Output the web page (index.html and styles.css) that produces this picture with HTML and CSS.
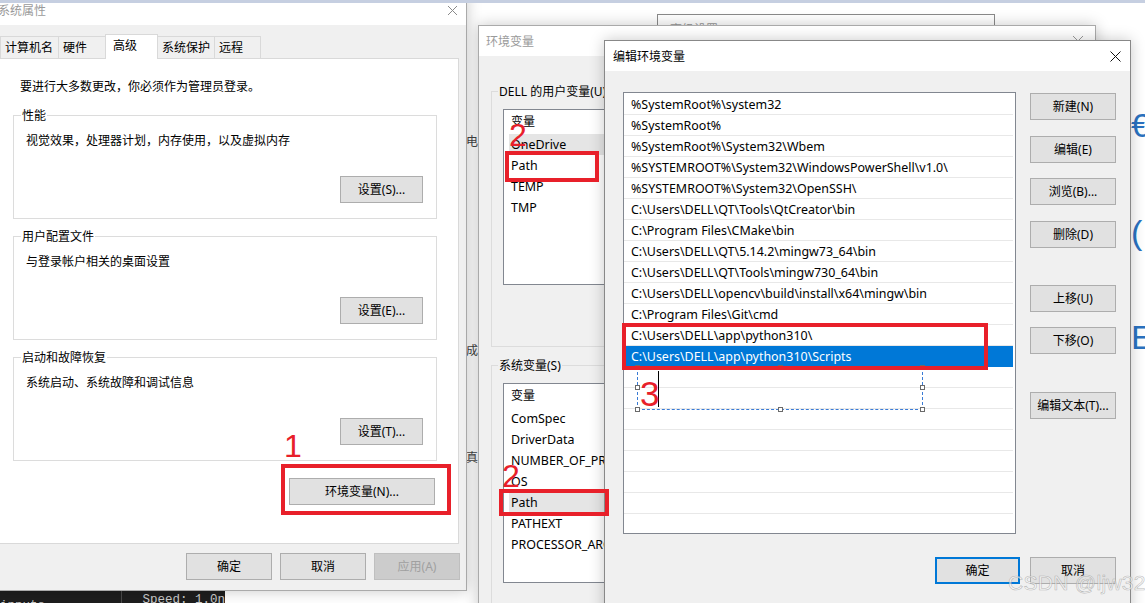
FILE: index.html
```html
<!DOCTYPE html>
<html lang="zh-CN">
<head>
<meta charset="utf-8">
<title>编辑环境变量</title>
<link rel="stylesheet" href="styles.css">
</head>
<body>
<div class="desk">
  <div class="topband"></div>

  <div class="term">
    <div class="t-left">inputs</div>
    <div class="t-div"></div>
    <div class="t-right">Speed: 1.0n</div>
  </div>

  <div class="back-chars"><span class="bc1">电</span><span class="bc2">成</span><span class="bc3">真</span></div>
  <div class="right-frags"><span class="rf1">€</span><span class="rf2">(</span><span class="rf3">E</span></div>

  <div class="win w-adv"><div class="adv-title">高级设置</div></div>

  <!-- 系统属性 -->
  <div class="win w-sys">
    <div class="titlebar">
      <span>系统属性</span>
      <svg class="x" width="9" height="9" viewBox="0 0 9 9"><path d="M0 0L9 9M9 0L0 9" stroke="#8a8a8a" stroke-width="1"/></svg>
    </div>
    <div class="sys-body">
      <div class="tabs">
        <div class="tab t1">计算机名</div>
        <div class="tab t2">硬件</div>
        <div class="tab sel t3">高级</div>
        <div class="tab t4">系统保护</div>
        <div class="tab t5">远程</div>
      </div>
      <div class="panel">
        <div class="intro">要进行大多数更改，你必须作为管理员登录。</div>
        <div class="group g1">
          <div class="legend">性能</div>
          <div class="gdesc">视觉效果，处理器计划，内存使用，以及虚拟内存</div>
          <div class="btn gbtn">设置(S)...</div>
        </div>
        <div class="group g2">
          <div class="legend">用户配置文件</div>
          <div class="gdesc">与登录帐户相关的桌面设置</div>
          <div class="btn gbtn">设置(E)...</div>
        </div>
        <div class="group g3">
          <div class="legend">启动和故障恢复</div>
          <div class="gdesc">系统启动、系统故障和调试信息</div>
          <div class="btn gbtn">设置(T)...</div>
        </div>
        <div class="btn envbtn">环境变量(N)...</div>
      </div>
      <div class="dlg-btns">
        <div class="btn b86">确定</div>
        <div class="btn b86">取消</div>
        <div class="btn b86 dis">应用(A)</div>
      </div>
    </div>
  </div>

  <!-- 环境变量 -->
  <div class="win w-env">
    <div class="titlebar">
      <span>环境变量</span>
      <svg class="x" width="10" height="10" viewBox="0 0 10 10"><path d="M0 0L10 10M10 0L0 10" stroke="#9a9a9a" stroke-width="1"/></svg>
    </div>
    <div class="env-body">
      <div class="egroup eg1">
        <div class="legend">DELL 的用户变量(U)</div>
        <div class="lv lv1">
          <div class="lv-head">变量</div>
          <div class="lv-row hl">OneDrive</div>
          <div class="lv-row">Path</div>
          <div class="lv-row">TEMP</div>
          <div class="lv-row">TMP</div>
        </div>
      </div>
      <div class="egroup eg2">
        <div class="legend">系统变量(S)</div>
        <div class="lv lv2">
          <div class="lv-head">变量</div>
          <div class="lv-row">ComSpec</div>
          <div class="lv-row">DriverData</div>
          <div class="lv-row">NUMBER_OF_PROCESSORS</div>
          <div class="lv-row">OS</div>
          <div class="lv-row hl">Path</div>
          <div class="lv-row">PATHEXT</div>
          <div class="lv-row">PROCESSOR_ARCHITECTURE</div>
        </div>
      </div>
    </div>
  </div>

  <!-- 编辑环境变量 -->
  <div class="win w-edit">
    <div class="titlebar">
      <span>编辑环境变量</span>
      <svg class="x" width="11" height="11" viewBox="0 0 11 11"><path d="M0.5 0.5L10.5 10.5M10.5 0.5L0.5 10.5" stroke="#111" stroke-width="1"/></svg>
    </div>
    <div class="edit-body">
      <div class="edit-main">
        <div class="elist">
          <div class="er">%SystemRoot%\system32</div>
          <div class="er">%SystemRoot%</div>
          <div class="er">%SystemRoot%\System32\Wbem</div>
          <div class="er">%SYSTEMROOT%\System32\WindowsPowerShell\v1.0\</div>
          <div class="er">%SYSTEMROOT%\System32\OpenSSH\</div>
          <div class="er">C:\Users\DELL\QT\Tools\QtCreator\bin</div>
          <div class="er">C:\Program Files\CMake\bin</div>
          <div class="er">C:\Users\DELL\QT\5.14.2\mingw73_64\bin</div>
          <div class="er">C:\Users\DELL\QT\Tools\mingw730_64\bin</div>
          <div class="er">C:\Users\DELL\opencv\build\install\x64\mingw\bin</div>
          <div class="er">C:\Program Files\Git\cmd</div>
          <div class="er">C:\Users\DELL\app\python310\</div>
          <div class="er sel">C:\Users\DELL\app\python310\Scripts</div>
          <div class="er"></div>
          <div class="er"></div>
          <div class="er"></div>
          <div class="er"></div>
          <div class="er"></div>
          <div class="er"></div>
          <div class="er"></div>
          <div class="er"></div>
          <div class="editbox">
            <span class="hd h-tl"></span><span class="hd h-tm"></span><span class="hd h-tr"></span>
            <span class="hd h-ml"></span><span class="hd h-mr"></span>
            <span class="hd h-bl"></span><span class="hd h-bm"></span><span class="hd h-br"></span>
            <span class="caret"></span>
          </div>
        </div>
        <div class="ebtns">
          <div class="btn">新建(N)</div>
          <div class="btn m16">编辑(E)</div>
          <div class="btn m15">浏览(B)...</div>
          <div class="btn m16">删除(D)</div>
          <div class="btn m37">上移(U)</div>
          <div class="btn m15">下移(O)</div>
          <div class="btn m38">编辑文本(T)...</div>
        </div>
      </div>
      <div class="edit-foot">
        <div class="btn ok">确定</div>
        <div class="btn cancel">取消</div>
      </div>
    </div>
  </div>

  <!-- annotations -->
  <div class="rbox ra"></div>
  <div class="rbox rb"></div>
  <div class="rbox rc"></div>
  <div class="rbox rd"></div>
  <div class="rnum n1">1</div>
  <div class="rnum n2a">2</div>
  <div class="rnum n2b">2</div>
  <div class="rnum n3">3</div>

  <div class="wm">CSDN @ljw32</div>
</div>
</body>
</html>
```
FILE: styles.css
```css
*{box-sizing:border-box;margin:0;padding:0}
html,body{width:1145px;height:603px;overflow:hidden}
body{background:#fff;font-family:"Noto Sans","Noto Sans CJK SC",sans-serif;font-size:12px;line-height:17px;color:#000}
.desk{position:relative;width:1145px;height:603px;overflow:hidden;background:#fff}
.topband{position:absolute;left:0;top:0;width:100%;height:3px;background:#c6cfe1;z-index:40}

/* generic window */
.win{position:absolute;display:flex;flex-direction:column;background:#f0f0f0;border:1px solid #aaaaaa;box-shadow:0 0 14px rgba(0,0,0,.22);overflow:hidden}
.titlebar{flex:none;display:flex;align-items:center;justify-content:space-between;background:#fff;white-space:nowrap}
.x{flex:none;display:block}
.btn{flex:none;height:27px;background:#e1e1e1;border:1px solid #adadad;display:flex;align-items:center;justify-content:center;white-space:nowrap}
.btn.dis{background:#cccccc;border-color:#bfbfbf;color:#a0a0a0}
.legend{align-self:flex-start;margin:-9px 0 0 -5px;padding:0 1px;background:#fff;line-height:17px;white-space:nowrap}

/* background bits */
.w-adv{left:657px;top:14px;width:338px;height:120px;background:#fff;border-color:#8a8a8a;box-shadow:none;z-index:1}
.adv-title{padding:6px 0 0 12px;color:#9a9a9a}
.term{position:absolute;left:0;top:591px;width:225px;height:12px;background:#1e1e1e;display:flex;z-index:1;overflow:hidden;font-family:"Liberation Mono",monospace;font-size:12.5px;line-height:14px;color:#cccccc}
.t-left{width:129px;padding-top:8px;white-space:nowrap}
.t-div{width:1px;background:#4a4a4a}
.t-right{padding-left:21px;padding-top:2px;white-space:nowrap}
.back-chars{position:absolute;left:466px;top:0;z-index:2;display:flex;flex-direction:column;color:#444}
.back-chars span{display:block;line-height:17px}
.bc1{margin-top:133px}.bc2{margin-top:192px}.bc3{margin-top:90px}
.right-frags{position:absolute;left:1131px;top:0;z-index:2;display:flex;flex-direction:column;color:#2a72c0;font-family:"Liberation Sans",sans-serif;font-size:34px;line-height:34px;font-weight:300}
.right-frags span{display:block}
.rf1{margin-top:108px}.rf2{margin-top:73px}.rf3{margin-top:71px}

/* 系统属性 */
.w-sys{left:-10px;top:-5px;width:477px;height:596px;z-index:5}
.w-sys .titlebar{height:29px;padding:0 9px 0 7px;color:#9a9a9a}
.sys-body{flex:1;display:flex;flex-direction:column;padding-top:9px}
.tabs{flex:none;display:flex;align-items:flex-end;height:24px;padding-left:9px;position:relative;z-index:2}
.tab{height:22px;border:1px solid #d9d9d9;border-bottom:0;background:#f0f0f0;margin-right:-1px;padding-left:4px;line-height:21px;white-space:nowrap}
.tab.sel{height:25px;margin-bottom:-1px;background:#fff;line-height:22px;padding-left:7px}
.t1{width:59px}.t2{width:48px}.t3{width:53px}.t4{width:58px}.t5{width:47px}
.panel{flex:none;margin-left:7px;width:461px;height:486px;background:#fff;border:1px solid #d9d9d9;padding-top:19px;display:flex;flex-direction:column}
.intro{padding-left:21px}
.group{flex:none;margin-left:14px;width:424px;height:104px;border:1px solid #dcdcdc;padding-left:12px;display:flex;flex-direction:column}
.g1{margin-top:20px}.g2,.g3{margin-top:17px}
.gdesc{margin-top:8px}
.gbtn{align-self:flex-end;margin:27px 13px 0 0;width:83px}
.envbtn{align-self:flex-end;margin:17px 23px 0 0;width:146px}
.dlg-btns{flex:none;display:flex;justify-content:flex-end;gap:8px;margin-top:9px;padding-right:6px}
.b86{width:86px}

/* 环境变量 */
.w-env{left:478px;top:25px;width:618px;height:620px;z-index:6}
.w-env .titlebar{height:30px;padding:0 12px 0 7px;color:#9a9a9a}
.env-body{padding:35px 0 0 12px;display:flex;flex-direction:column}
.egroup{flex:none;width:590px;border:1px solid #dcdcdc;padding-left:11px;display:flex;flex-direction:column}
.eg1{height:256px}.eg2{height:300px;margin-top:18px}
.egroup .legend{background:#f0f0f0}
.lv{flex:none;margin-top:9px;width:560px;background:#fff;border:1px solid #828790;overflow:hidden}
.lv1{height:176px}.lv2{height:200px}
.lv-head{height:24px;line-height:24px;padding-left:7px}
.lv-row{height:21px;line-height:21px;margin-left:5px;padding-left:2px;white-space:nowrap;font-size:12.45px}
.lv-row.hl{background:#e5e5e5}

/* 编辑环境变量 */
.w-edit{left:604px;top:40px;width:527px;height:600px;z-index:7;border-color:#888888}
.w-edit .titlebar{height:30px;padding:0 9px 0 8px}
.edit-body{display:flex;flex-direction:column;padding:21px 14px 0 18px}
.edit-main{display:flex;gap:14px}
.elist{position:relative;flex:none;width:393px;height:442px;background:#fff;border:1px solid #828790;padding-top:1px;overflow:hidden}
.er{height:21px;line-height:21px;border-bottom:1px solid #e8e8e8;padding-left:7px;margin-right:2px;white-space:nowrap;font-size:12.45px}
.er.sel{background:#0078d7;color:#fff;margin-left:2px;padding-left:5px;border-bottom-color:#0078d7}
.ebtns{flex:none;display:flex;flex-direction:column;padding-top:1px;width:86px}
.ebtns .btn{width:86px}
.m15{margin-top:15px}.m16{margin-top:16px}.m37{margin-top:37px}.m38{margin-top:38px}
.edit-foot{display:flex;justify-content:flex-end;gap:10px;margin-top:23px}
.ok{width:85px;border:2px solid #0078d7}
.cancel{width:86px}

.editbox{position:absolute;left:13px;top:274px;width:286px;height:43px;border:1px dashed #3a7bd5}
.hd{position:absolute;width:5px;height:5px;background:#fff;border:1px solid #6a6a6a}
.h-tl{left:-3px;top:-3px}.h-tm{left:140px;top:-3px}.h-tr{right:-3px;top:-3px}
.h-ml{left:-3px;top:17px}.h-mr{right:-3px;top:17px}
.h-bl{left:-3px;bottom:-3px}.h-bm{left:140px;bottom:-3px}.h-br{right:-3px;bottom:-3px}
.caret{position:absolute;left:20px;top:3px;width:1px;height:36px;background:#000}

/* annotations */
.rbox{position:absolute;border:4px solid #e8202a;z-index:20}
.ra{left:281px;top:464px;width:170px;height:51px}
.rb{left:505px;top:151px;width:94px;height:31px}
.rc{left:499px;top:489px;width:110px;height:27px}
.rd{left:622px;top:323px;width:366px;height:47px}
.rnum{position:absolute;z-index:20;color:#e8202a;font-family:"Liberation Sans",sans-serif;font-size:32px;line-height:32px}
.n1{left:284px;top:430px}
.n2a{left:509px;top:119px}
.n2b{left:502px;top:460px}
.n3{left:640px;top:376px;font-size:35px;line-height:35px}

.wm{position:absolute;left:1008px;top:571px;z-index:30;font-family:"Liberation Sans",sans-serif;font-size:21px;line-height:24px;color:rgba(255,255,255,.6);-webkit-text-stroke:0.6px rgba(120,120,120,.5);white-space:nowrap;letter-spacing:0.3px}
```
